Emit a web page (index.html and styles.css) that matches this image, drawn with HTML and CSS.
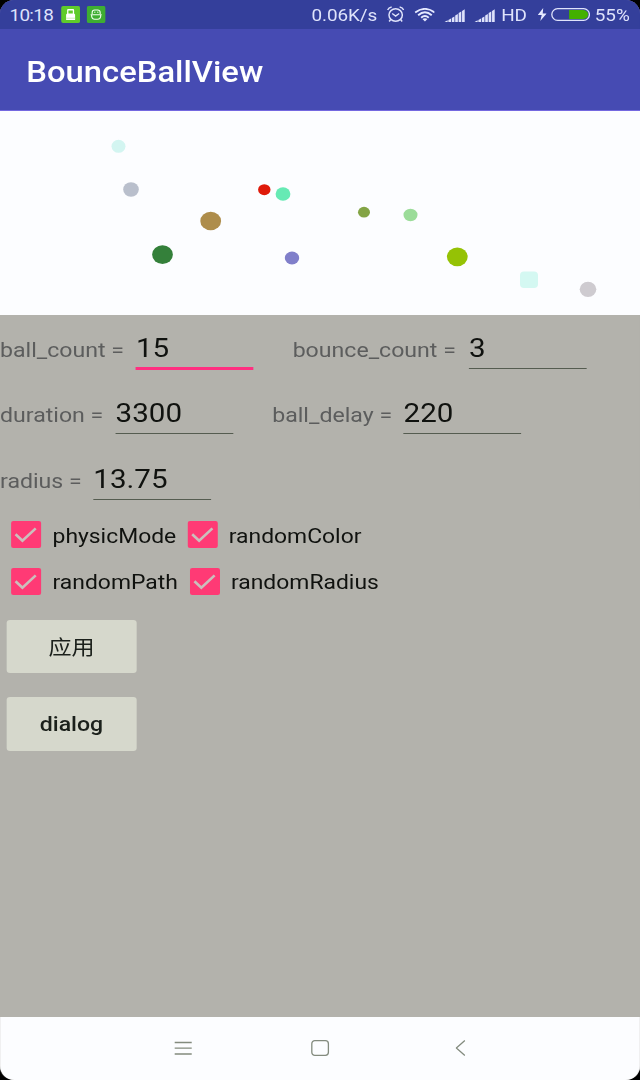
FILE: index.html
```html
<!DOCTYPE html>
<html lang="en">
<head>
<meta charset="utf-8">
<title>BounceBallView</title>
<link rel="stylesheet" href="styles.css">
</head>
<body>
<div class="screen">
  <header class="top">
    <div class="status">
      <span class="clock">10:18</span>
      <svg class="app-icon" viewBox="0 0 19 17" preserveAspectRatio="none"><rect width="19" height="17" rx="2" fill="#5fcb2b"/><path d="M5 14V8.500l1-1V4q0-1 1-1h5q1 0 1 1v3.500l1 1V14z" fill="#fff"/><path d="M7.300 4.500h4.400v3H7.300z" fill="#5fcb2b"/><path d="M5 12.200h9" stroke="#c9ecb8"/></svg>
      <svg class="app-icon second" viewBox="0 0 19 17" preserveAspectRatio="none"><rect width="19" height="17" rx="2" fill="#3eae32"/><g fill="none" stroke="#f2fff0" stroke-width="1.100"><path d="M5.500 8V6.500Q5.500 4 8 4h3q2.500 0 2.500 2.500V8M4 8.700h11M5 9v1.500Q5.500 13.300 8 13.300h3q2.500 0 3-2.800V9"/></g><path d="M7.500 6.200h1.200M10.500 6.200h1.200" stroke="#fff"/></svg>
      <span class="speed">0.06K/s</span>
      <svg class="alarm" viewBox="0 0 18 17" preserveAspectRatio="none" fill="none" stroke="#dfe3fb" stroke-width="1.500"><ellipse cx="9" cy="9" rx="6.700" ry="6.200"/><path d="M5.500 7.500L9 10l3.500-2.500M1 4Q2 1.500 5 1M17 4Q16 1.500 13 1M4 13.500l-1.500 2M14 13.500l1.500 2"/></svg>
      <svg class="wifi" viewBox="0 0 21 14" preserveAspectRatio="none" fill="none" stroke="#e5e9ff" stroke-width="1.900"><path d="M.7 4.600Q10.500-2.800 20.300 4.600M3.700 7.200Q10.500 1.500 17.300 7.200M6.700 9.700Q10.500 6.500 14.300 9.700"/><path d="M8 11Q10.500 9.500 13 11L10.500 13.500z" fill="#e5e9ff" stroke="none"/></svg>
      <svg class="signal" viewBox="0 0 21 13" preserveAspectRatio="none" fill="#dfe3fb"><path d="M0 13l3.300-1.700V13zM4 11l2.700-1.500V13H4zM7.500 9l2.700-1.500V13H7.500zM11 6.500L13.700 5v8H11zM14.500 4l2.700-1.500V13h-2.700zM18 2l2.700-1.700V13H18z"/></svg>
      <svg class="signal signal-b" viewBox="0 0 21 13" preserveAspectRatio="none" fill="#dfe3fb"><path d="M0 13l3.300-1.700V13zM4 11l2.700-1.500V13H4zM7.500 9l2.700-1.500V13H7.500zM11 6.500L13.700 5v8H11zM14.500 4l2.700-1.500V13h-2.700zM18 2l2.700-1.700V13H18z"/></svg>
      <span class="hd">HD</span>
      <svg class="bolt" viewBox="0 0 9 13" preserveAspectRatio="none"><path d="M5.500 0L0 7h4L2.500 13 9 5.500H5z" fill="#e5e9ff"/></svg>
      <svg class="battery" viewBox="0 0 39 13" preserveAspectRatio="none"><rect x=".7" y=".7" width="37.600" height="11.600" rx="5.800" fill="none" stroke="#dfe3fb" stroke-width="1.300"/><path d="M18 2h14q5 .5 5 4.500t-5 4.500H18z" fill="#43b000"/></svg>
      <span class="percent">55%</span>
    </div>
    <h1 class="title">BounceBallView</h1>
  </header>

  <svg class="ball-view" viewBox="0 0 640 204" preserveAspectRatio="none">
    <ellipse cx="118.500" cy="35.300" rx="7" ry="6.500" fill="#d3f5f1"/>
    <ellipse cx="131" cy="78.500" rx="7.800" ry="7.300" fill="#b9bfcc"/>
    <ellipse cx="162.500" cy="143.600" rx="10.400" ry="9.300" fill="#34803a"/>
    <ellipse cx="210.700" cy="110" rx="10.400" ry="9.300" fill="#ae8d4b"/>
    <ellipse cx="264.300" cy="78.700" rx="6.200" ry="5.500" fill="#df1a0a"/>
    <ellipse cx="283" cy="83" rx="7.400" ry="6.800" fill="#66eab4"/>
    <ellipse cx="292" cy="147" rx="7.200" ry="6.500" fill="#807fca"/>
    <ellipse cx="364" cy="101.200" rx="6" ry="5.400" fill="#83a445"/>
    <ellipse cx="410.500" cy="104" rx="7" ry="6.200" fill="#9bdc99"/>
    <ellipse cx="457.300" cy="145.800" rx="10.400" ry="9.400" fill="#95c205"/>
    <rect x="520" y="160.500" width="18" height="16.500" rx="4" fill="#d4f8f2"/>
    <ellipse cx="588" cy="178.300" rx="8.300" ry="7.600" fill="#cecbd0"/>
  </svg>

  <main class="form">
    <div class="row">
      <label class="l-ball">ball_count =</label><span class="field focused">15</span>
      <label class="next l-bounce">bounce_count =</label><span class="field">3</span>
    </div>
    <div class="row">
      <label class="l-duration">duration =</label><span class="field">3300</span>
      <label class="next l-delay">ball_delay =</label><span class="field">220</span>
    </div>
    <div class="row">
      <label class="l-radius">radius =</label><span class="field">13.75</span>
    </div>
    <div class="checks">
      <span class="check"><svg viewBox="0 0 30 27" preserveAspectRatio="none"><path d="M4.500 13.500l7 6.500L25 7.500"/></svg></span><span class="check-text t-physic">physicMode</span>
      <span class="check"><svg viewBox="0 0 30 27" preserveAspectRatio="none"><path d="M4.500 13.500l7 6.500L25 7.500"/></svg></span><span class="check-text">randomColor</span>
    </div>
    <div class="checks">
      <span class="check"><svg viewBox="0 0 30 27" preserveAspectRatio="none"><path d="M4.500 13.500l7 6.500L25 7.500"/></svg></span><span class="check-text t-path">randomPath</span>
      <span class="check"><svg viewBox="0 0 30 27" preserveAspectRatio="none"><path d="M4.500 13.500l7 6.500L25 7.500"/></svg></span><span class="check-text">randomRadius</span>
    </div>
    <div class="buttons">
      <div class="button cjk">应用</div>
      <div class="button">dialog</div>
    </div>
  </main>

  <nav class="nav">
    <svg viewBox="0 0 18 16" class="menu" preserveAspectRatio="none"><path d="M0 2.500h17.500M0 8.200h17.500M0 14h17.500"/></svg>
    <svg viewBox="0 0 18 16" class="home" preserveAspectRatio="none"><rect x=".7" y=".7" width="16.600" height="14.600" rx="3"/></svg>
    <svg viewBox="0 0 10 16" class="back" preserveAspectRatio="none"><path d="M9.300 .5L.8 8l8.500 7.500"/></svg>
  </nav>
</div>
</body>
</html>
```

FILE: styles.css
```css
* { box-sizing: border-box; }
body { margin: 0; height: 1080px; overflow: hidden; background: #000; }

/* The device picture is anamorphic: 576 layout units fill 640 pixels. */
.screen {
  width: 576px;
  height: 1080px;
  display: flex;
  flex-direction: column;
  overflow: hidden;
  border-radius: 13px / 14px;
  background: #b3b2ac;
  font-family: Roboto, "Noto Sans CJK SC", sans-serif;
  transform: scaleX(1.11111);
  transform-origin: 0 0;
}
svg { display: block; flex: none; }

.top { height: 110.500px; flex: none; background: #464bb3; border-bottom: 1px solid #7468e0; }
.status {
  height: 29px;
  display: flex;
  align-items: center;
  background: #343f9b;
  color: #dfe3fb;
  font-size: 17px;
  line-height: 30px;
  padding-left: 8.500px;
  white-space: nowrap;
}
.status span { flex: none; padding-top: 1px; }
.clock { width: 46.400px; letter-spacing: -0.600px; }
.app-icon { width: 17.100px; height: 17px; }
.second { margin-left: 5.600px; }
.speed { width: 67px; margin-left: 185.600px; letter-spacing: -0.050px; }
.alarm { width: 16.200px; height: 17px; margin-left: 0.800px; }
.wifi { width: 18.900px; height: 14px; margin-left: 8.300px; }
.signal { width: 18.500px; height: 13px; margin-left: 9px; margin-top: 1px; }
.signal-b { margin-left: 8.200px; }
.hd { width: 31px; margin-left: 5.400px; }
.bolt { width: 8px; height: 13px; margin-left: 1.600px; }
.battery { width: 35.100px; height: 13px; margin-left: 4px; }
.percent { margin-left: 4.500px; }
.title {
  margin: 0;
  padding: 2px 0 0 23.700px;
  font-size: 29.500px;
  line-height: 82px;
  font-weight: 500;
  color: #fff;
}

.ball-view { width: 576px; height: 204px; background: #fcfdff; }

.form { flex: 1; }
.row { height: 65.600px; display: flex; align-items: flex-start; }
.row label {
  flex: none;
  padding-top: 23px;
  font-size: 20.800px;
  line-height: 24px;
  color: #5c5d5d;
  white-space: nowrap;
}
.l-ball { width: 122.400px; }
.next { margin-left: 35.200px; }
.l-bounce { width: 158.800px; }
.l-duration { width: 104px; }
.l-delay { width: 118.200px; }
.l-radius { width: 84px; }
.field {
  width: 105.800px;
  height: 54px;
  padding-top: 17px;
  border-bottom: 1.500px solid #555c50;
  font-size: 26.600px;
  line-height: 32px;
  color: #10120f;
}
.focused { height: 55px; border-bottom: 3px solid #ff2f80; }

.checks { height: 46.800px; display: flex; align-items: center; padding-left: 10.400px; }
.check { width: 26.600px; height: 26.500px; border-radius: 2px; background: #ff3a75; flex: none; }
.check svg { width: 26.600px; height: 26.500px; fill: none; stroke: #cbbfbc; stroke-width: 2.700; }
.check-text { padding: 2px 0 0 10.300px; font-size: 20.600px; line-height: 24px; color: #10120f; }
.t-physic { width: 132px; }
.t-path { width: 134px; }

.buttons { display: flex; flex-direction: column; gap: 24px; padding: 15px 0 0 5.600px; }
.button {
  width: 117.500px;
  height: 53.400px;
  border-radius: 3px;
  background: #d6d8cc;
  color: #1b201b;
  font-size: 20.800px;
  font-weight: 500;
  line-height: 55px;
  text-align: center;
}
.cjk { font-weight: 400; line-height: 57px; }

.nav { height: 63.500px; flex: none; display: flex; align-items: center; background: #fcfdff; padding-left: 157.200px; }
.nav svg { height: 16px; fill: none; stroke: #838b7e; stroke-width: 1.300; }
.menu { width: 16px; }
.home { width: 16.200px; margin-left: 107.200px; }
.back { width: 9px; margin-left: 113.200px; }
```
